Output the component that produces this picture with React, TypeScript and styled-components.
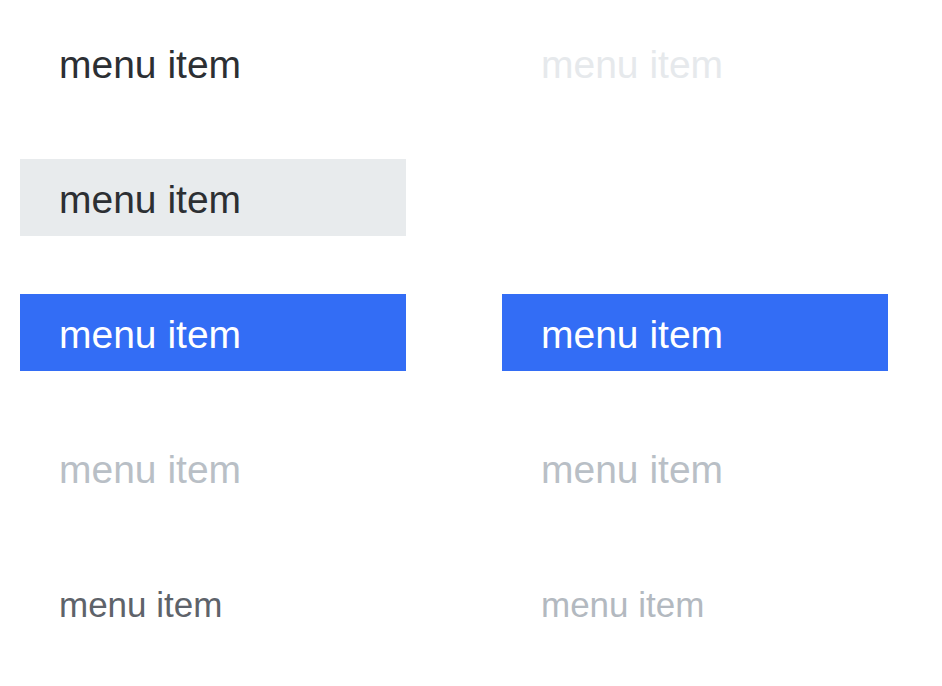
import React from "react";
import styled, { createGlobalStyle, css } from "styled-components";

const Global = createGlobalStyle`
  html, body { margin: 0; padding: 0; background: #ffffff; }
  body { font-family: "Liberation Sans", Arial, Helvetica, sans-serif; }
`;

const Page = styled.div`
  display: grid;
  grid-template-columns: 386px 386px;
  column-gap: 96px;
  row-gap: 58px;
  grid-auto-rows: 77px;
  padding: 24px 0 0 20px;
`;

type Variant = "normal" | "hover" | "active" | "disabled" | "faint" | "small" | "smallFaint" | "empty";

const variants: Record<Variant, ReturnType<typeof css>> = {
  normal: css`color: #2c2f33;`,
  hover: css`color: #2c2f33; background: #e8ebed;`,
  active: css`color: #ffffff; background: #336df5;`,
  disabled: css`color: #b9bfc6;`,
  faint: css`color: #e6e9ec;`,
  small: css`color: #5e636a; font-size: 35px;`,
  smallFaint: css`color: #b3b9c0; font-size: 35px;`,
  empty: css``,
};

const Item = styled.div<{ $v: Variant }>`
  display: flex;
  align-items: center;
  box-sizing: border-box;
  height: 77px;
  padding: 4px 0 0 39px;
  font-size: 39px;
  line-height: 1;
  white-space: nowrap;
  ${(p) => variants[p.$v]}
`;

const rows: Variant[][] = [
  ["normal", "faint"],
  ["hover", "empty"],
  ["active", "active"],
  ["disabled", "disabled"],
  ["small", "smallFaint"],
];

export default function App() {
  return (
    <>
      <Global />
      <Page>
        {rows.flat().map((v, i) => (
          <Item key={i} $v={v}>
            {v === "empty" ? null : "menu item"}
          </Item>
        ))}
      </Page>
    </>
  );
}
